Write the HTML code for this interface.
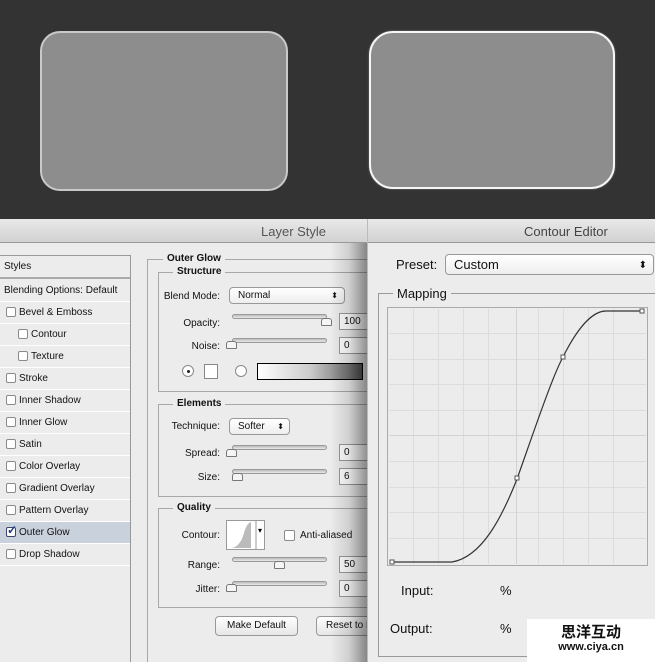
<!DOCTYPE html>
<html><head><style>
*{margin:0;padding:0;box-sizing:border-box}
html{overflow:hidden;width:655px;height:662px}
body{width:655px;height:662px;position:relative;overflow:hidden;background:#333;font-family:"Liberation Sans",sans-serif;font-size:10px;color:#111}
.a{position:absolute}
.t{position:absolute;white-space:nowrap}
.row{position:absolute;left:0;width:130px;height:22px;border-bottom:1px solid #fff;line-height:21px;padding-left:19px}
.cb{position:absolute;width:10px;height:10px;border:1px solid #8a8a8a;border-radius:2px;background:#fff}
.gb{position:absolute;border:1px solid #a8a8a8}
.lg{position:absolute;background:#ececec;padding:0 4px;font-weight:bold;font-size:10px;line-height:12px}
.trk{position:absolute;height:5px;border:1px solid #9a9a9a;border-radius:3px;background:linear-gradient(#bdbdbd,#e8e8e8)}
.th{position:absolute;width:11px;height:8px;border:1px solid #777;border-radius:3px 3px 1px 1px;background:#f5f5f5}
.in{position:absolute;width:32px;height:17px;border:1px solid #999;background:#fff;padding-left:4px;line-height:15px}
.pop{position:absolute;border:1px solid #999;border-radius:4px;background:linear-gradient(#fff,#eee);padding-left:8px}
.btn{position:absolute;border:1px solid #999;border-radius:4px;background:linear-gradient(#fff,#e6e6e6);text-align:center;line-height:18px}
.lbl{position:absolute;text-align:right;white-space:nowrap}
</style></head><body>
<div class="a" style="left:40px;top:31px;width:248px;height:160px;background:#8d8d8d;border:2px solid #c9c9c9;border-radius:20px"></div>
<div class="a" style="left:369px;top:31px;width:246px;height:158px;background:#8d8d8d;border:2px solid #f6f6f6;border-radius:24px;box-shadow:0 0 2px #777"></div>

<div class="a" style="left:0;top:219px;width:370px;height:443px;background:#ececec"></div>
<div class="a" style="left:0;top:219px;width:370px;height:24px;background:linear-gradient(#e9e9e9,#d2d2d2);border-bottom:1px solid #999"></div>
<div class="t" style="left:261px;top:224px;font-size:13px;color:#555">Layer Style</div>

<div class="a" style="left:0;top:255px;width:131px;height:407px;border-right:1px solid #999;border-top:1px solid #999"></div>
<div class="row" style="top:256px;padding-left:4px;border-bottom:2px solid #aaa;height:23px">Styles</div>
<div class="row" style="top:280px;padding-left:4px">Blending Options: Default</div>
<div class="row" style="top:302px">Bevel &amp; Emboss</div>
<div class="row" style="top:324px;padding-left:31px">Contour</div>
<div class="row" style="top:346px;padding-left:31px">Texture</div>
<div class="row" style="top:368px">Stroke</div>
<div class="row" style="top:390px">Inner Shadow</div>
<div class="row" style="top:412px">Inner Glow</div>
<div class="row" style="top:434px">Satin</div>
<div class="row" style="top:456px">Color Overlay</div>
<div class="row" style="top:478px">Gradient Overlay</div>
<div class="row" style="top:500px">Pattern Overlay</div>
<div class="row" style="top:522px;background:#c9d1dc">Outer Glow</div>
<div class="row" style="top:544px">Drop Shadow</div>
<div class="cb" style="left:6px;top:307px"></div>
<div class="cb" style="left:18px;top:329px"></div>
<div class="cb" style="left:18px;top:351px"></div>
<div class="cb" style="left:6px;top:373px"></div>
<div class="cb" style="left:6px;top:395px"></div>
<div class="cb" style="left:6px;top:417px"></div>
<div class="cb" style="left:6px;top:439px"></div>
<div class="cb" style="left:6px;top:461px"></div>
<div class="cb" style="left:6px;top:483px"></div>
<div class="cb" style="left:6px;top:505px"></div>
<div class="cb" style="left:6px;top:527px;border-color:#446"><span class="t" style="left:0;top:-5px;font-size:12px;color:#1d3f8a;font-weight:bold">✓</span></div>
<div class="cb" style="left:6px;top:549px"></div>

<div class="gb" style="left:147px;top:259px;width:240px;height:420px;border-right:none;border-bottom:none"></div>
<div class="lg" style="left:163px;top:253px">Outer Glow</div>
<div class="gb" style="left:158px;top:272px;width:230px;height:120px;border-right:none"></div>
<div class="lg" style="left:173px;top:266px">Structure</div>
<div class="gb" style="left:158px;top:404px;width:230px;height:93px;border-right:none"></div>
<div class="lg" style="left:173px;top:398px">Elements</div>
<div class="gb" style="left:158px;top:508px;width:230px;height:100px;border-right:none"></div>
<div class="lg" style="left:173px;top:502px">Quality</div>

<div class="lbl" style="left:160px;width:60px;top:291px">Blend Mode:</div>
<div class="pop" style="left:229px;top:287px;width:116px;height:17px;line-height:16px">Normal<span class="t" style="right:6px;top:0;font-size:8px">⬍</span></div>
<div class="lbl" style="left:160px;width:60px;top:318px">Opacity:</div>
<div class="trk" style="left:232px;top:314px;width:95px"></div>
<div class="th" style="left:321px;top:318px"></div>
<div class="in" style="left:339px;top:313px">100</div>
<div class="lbl" style="left:160px;width:60px;top:341px">Noise:</div>
<div class="trk" style="left:232px;top:338px;width:95px"></div>
<div class="th" style="left:226px;top:341px"></div>
<div class="in" style="left:339px;top:337px">0</div>
<div class="a" style="left:182px;top:365px;width:12px;height:12px;border:1px solid #888;border-radius:50%;background:#fff"><div class="a" style="left:4px;top:4px;width:3px;height:3px;background:#222;border-radius:50%"></div></div>
<div class="a" style="left:204px;top:364px;width:14px;height:15px;border:1px solid #888;background:#fff"></div>
<div class="a" style="left:235px;top:365px;width:12px;height:12px;border:1px solid #888;border-radius:50%;background:#fff"></div>
<div class="a" style="left:257px;top:363px;width:106px;height:17px;border:1px solid #000;background:linear-gradient(90deg,#fff,#ccc 50%,#555)"></div>

<div class="lbl" style="left:160px;width:60px;top:421px">Technique:</div>
<div class="pop" style="left:229px;top:418px;width:61px;height:17px;line-height:16px">Softer<span class="t" style="right:5px;top:0;font-size:8px">⬍</span></div>
<div class="lbl" style="left:160px;width:60px;top:448px">Spread:</div>
<div class="trk" style="left:232px;top:445px;width:95px"></div>
<div class="th" style="left:226px;top:449px"></div>
<div class="in" style="left:339px;top:444px">0</div>
<div class="lbl" style="left:160px;width:60px;top:472px">Size:</div>
<div class="trk" style="left:232px;top:469px;width:95px"></div>
<div class="th" style="left:232px;top:473px"></div>
<div class="in" style="left:339px;top:468px">6</div>

<div class="lbl" style="left:160px;width:60px;top:530px">Contour:</div>
<div class="a" style="left:226px;top:520px;width:39px;height:30px;border:1px solid #999;background:#fff"><svg width="37" height="28" class="a" style="left:0;top:0"><path d="M3 27 C10 27 14 22 17 12 C19 5 21 2 24 1 L24 27 Z" fill="#bbb"/><line x1="29" y1="0" x2="29" y2="28" stroke="#999"/><text x="31" y="12" font-size="8">▾</text></svg></div>
<div class="cb" style="left:284px;top:530px;width:11px;height:11px"></div>
<div class="t" style="left:300px;top:530px">Anti-aliased</div>
<div class="lbl" style="left:160px;width:60px;top:560px">Range:</div>
<div class="trk" style="left:232px;top:557px;width:95px"></div>
<div class="th" style="left:274px;top:561px"></div>
<div class="in" style="left:339px;top:556px">50</div>
<div class="lbl" style="left:160px;width:60px;top:584px">Jitter:</div>
<div class="trk" style="left:232px;top:581px;width:95px"></div>
<div class="th" style="left:226px;top:584px"></div>
<div class="in" style="left:339px;top:580px">0</div>
<div class="btn" style="left:215px;top:616px;width:83px;height:20px">Make Default</div>
<div class="btn" style="left:316px;top:616px;width:83px;height:20px;text-align:left;padding-left:9px">Reset to Default</div>

<div class="a" style="left:330px;top:243px;width:38px;height:419px;background:linear-gradient(90deg,rgba(0,0,0,0),rgba(0,0,0,.12) 50%,rgba(0,0,0,.45))"></div>

<div class="a" style="left:367px;top:219px;width:288px;height:443px;background:#ececec;border-left:1px solid #bbb"></div>
<div class="a" style="left:368px;top:219px;width:287px;height:24px;background:linear-gradient(#e9e9e9,#d2d2d2);border-bottom:1px solid #999"></div>
<div class="t" style="left:524px;top:224px;font-size:13px;color:#444">Contour Editor</div>
<div class="t" style="left:396px;top:257px;font-size:13px">Preset:</div>
<div class="pop" style="left:445px;top:254px;width:209px;height:21px;font-size:13px;line-height:19px">Custom<span class="t" style="right:6px;top:1px;font-size:10px">⬍</span></div>
<div class="gb" style="left:378px;top:293px;width:290px;height:364px;border-color:#999"></div>
<div class="lg" style="left:393px;top:286px;font-weight:normal;font-size:13px;line-height:15px">Mapping</div>
<svg class="a" style="left:387px;top:307px" width="262" height="260">
<rect x="0.5" y="0.5" width="260" height="258" fill="#ececec" stroke="#aaa"/>
<g stroke="#dcdcdc" stroke-width="1">
<path d="M26.5 2V257M51.5 2V257M76.5 2V257M101.5 2V257M151.5 2V257M176.5 2V257M201.5 2V257M226.5 2V257"/>
<path d="M2 26.5H259M2 52.5H259M2 77.5H259M2 103.5H259M2 154.5H259M2 180.5H259M2 205.5H259M2 231.5H259"/>
</g>
<path d="M129.5 2V257M2 128.5H259" stroke="#d2d2d2"/>
<path d="M5 255 L65 255 C95 250 115 210 130 172 C145 130 165 70 176 50 C190 22 205 4 219 4 L255 4" fill="none" stroke="#333" stroke-width="1.2"/>
<rect x="3" y="253" width="4" height="4" fill="#fff" stroke="#555"/>
<rect x="128" y="169" width="4" height="4" fill="#fff" stroke="#555"/>
<rect x="174" y="48" width="4" height="4" fill="#fff" stroke="#555"/>
<rect x="253" y="2" width="4" height="4" fill="#fff" stroke="#555"/>
</svg>
<div class="t" style="left:401px;top:583px;font-size:13px">Input:</div>
<div class="t" style="left:500px;top:583px;font-size:13px">%</div>
<div class="t" style="left:390px;top:621px;font-size:13px">Output:</div>
<div class="t" style="left:500px;top:621px;font-size:13px">%</div>
<div class="a" style="left:527px;top:619px;width:128px;height:43px;background:#fff;text-align:center">
<div style="font-family:'Noto Sans CJK SC',sans-serif;font-size:15px;font-weight:bold;line-height:18px;margin-top:4px">思洋互动</div>
<div style="font-size:11px;font-weight:bold;line-height:12px">www.ciya.cn</div></div>
</body></html>
